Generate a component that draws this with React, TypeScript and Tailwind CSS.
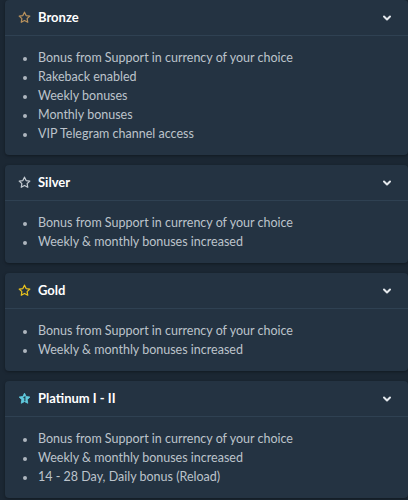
import { ChevronDown } from 'lucide-react';

type Tier = {
    name: string;
    star: 'bronze' | 'silver' | 'gold' | 'platinum';
    perks: string[];
};

const tiers: Tier[] = [
    {
        name: 'Bronze',
        star: 'bronze',
        perks: [
            'Bonus from Support in currency of your choice',
            'Rakeback enabled',
            'Weekly bonuses',
            'Monthly bonuses',
            'VIP Telegram channel access',
        ],
    },
    {
        name: 'Silver',
        star: 'silver',
        perks: ['Bonus from Support in currency of your choice', 'Weekly & monthly bonuses increased'],
    },
    {
        name: 'Gold',
        star: 'gold',
        perks: ['Bonus from Support in currency of your choice', 'Weekly & monthly bonuses increased'],
    },
    {
        name: 'Platinum I - II',
        star: 'platinum',
        perks: [
            'Bonus from Support in currency of your choice',
            'Weekly & monthly bonuses increased',
            '14 - 28 Day, Daily bonus (Reload)',
        ],
    },
];

const starPath = 'M12 3.5l2.6 5.4 5.9.8-4.3 4.1 1 5.8L12 16.8l-5.2 2.8 1-5.8-4.3-4.1 5.9-.8z';

const StarIcon = ({ kind }: { kind: Tier['star'] }) => {
    if (kind === 'platinum') {
        return (
            <svg className="w-[15px] h-[15px]" viewBox="0 0 24 24">
                <path d={starPath} fill="#5fc8dc" stroke="#5fc8dc" strokeWidth={1.5} strokeLinejoin="round" />
                <path d="M11 10.5l1.6-1v6" fill="none" stroke="#1f3d4a" strokeWidth={1.8} strokeLinecap="round" />
            </svg>
        );
    }
    const color = kind === 'bronze' ? '#b8915c' : kind === 'gold' ? '#e9c21d' : '#c3cad1';
    return (
        <svg className="w-[15px] h-[15px]" viewBox="0 0 24 24">
            <path d={starPath} fill="none" stroke={color} strokeWidth={2} strokeLinejoin="round" />
        </svg>
    );
};

const TierCard = ({ tier }: { tier: Tier }) => (
    <div className="bg-[#243342] rounded-[4px] shadow-[0_1px_3px_rgba(0,0,0,0.35)] overflow-hidden">
        <div className="h-[36px] flex items-center pl-[12px] pr-[15px] border-b border-[#2f4152]">
            <StarIcon kind={tier.star} />
            <span className="ml-[6px] text-[13px] font-bold text-white">{tier.name}</span>
            <ChevronDown className="ml-auto w-[12px] h-[12px] text-[#e4e8ec]" strokeWidth={4} />
        </div>
        <ul className="pt-[13px] pb-[11px] pl-[18px]">
            {tier.perks.map((perk) => (
                <li key={perk} className="flex items-center h-[19px] text-[12.5px] text-[#bcc3cb]">
                    <span className="w-[4px] h-[4px] rounded-full bg-[#aeb6be]" />
                    <span className="ml-[11px]">{perk}</span>
                </li>
            ))}
        </ul>
    </div>
);

export default function App() {
    return (
        <div className="bg-[#1b2733] min-h-[500px] pl-[5px]" style={{ fontFamily: 'Lato, "Open Sans", sans-serif' }}>
            <div className="flex flex-col gap-[10px]">
                {tiers.map((tier) => (
                    <TierCard key={tier.name} tier={tier} />
                ))}
            </div>
        </div>
    );
}
